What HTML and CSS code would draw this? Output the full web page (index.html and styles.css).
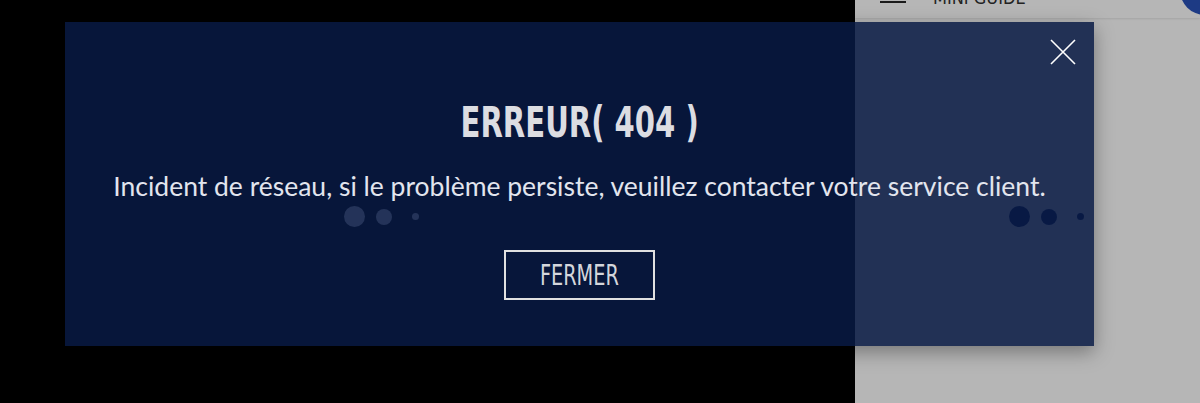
FILE: index.html
```html
<!DOCTYPE html>
<html lang="fr">
<head>
<meta charset="utf-8">
<title>Erreur 404</title>
<link rel="stylesheet" href="styles.css">
</head>
<body>
<div class="stage">
  <section class="pane pane-dark">
    <div class="loader loader-light">
      <span class="dot dot-lg"></span><span class="dot dot-md"></span><span class="dot dot-sm"></span>
    </div>
  </section>
  <section class="pane pane-grey">
    <header class="topbar">
      <span class="burger"><i></i><i></i></span>
      <span class="brand">MINI GUIDE</span>
      <span class="avatar"></span>
    </header>
    <div class="loader loader-navy">
      <span class="dot dot-lg"></span><span class="dot dot-md"></span><span class="dot dot-sm"></span>
    </div>
  </section>
</div>

<div class="modal" role="dialog">
  <button class="close" aria-label="Fermer">
    <svg width="26" height="26" viewBox="0 0 26 26"><path d="M1 1L25 25M25 1L1 25" stroke="#ffffff" stroke-width="1.6" fill="none"/></svg>
  </button>
  <h1 class="title"><span class="title-text">ERREUR( 404 )</span></h1>
  <p class="message">Incident de réseau, si le problème persiste, veuillez contacter votre service client.</p>
  <button class="btn"><span class="btn-label">FERMER</span></button>
</div>
</body>
</html>
```
FILE: styles.css
```css
html, body {
  margin: 0;
  padding: 0;
  height: 100%;
  background: #000;
  overflow: hidden;
}
.stage {
  display: grid;
  grid-template-columns: 855px 1fr;
  height: 403px;
}
.pane {
  position: relative;
  display: flex;
  flex-direction: column;
}
.pane-dark { background: #000; }
.pane-grey { background: #b6b6b6; }

.topbar {
  height: 18px;
  display: flex;
  align-items: flex-start;
  box-shadow: 0 1px 2px rgba(0,0,0,0.10);
  position: relative;
}
.burger {
  display: flex;
  flex-direction: column;
  gap: 7px;
  width: 26px;
  margin-left: 25px;
  margin-top: -8px;
}
.burger i {
  display: block;
  height: 2px;
  background: #1a1a1a;
}
.brand {
  font-family: "Liberation Sans Narrow", "DejaVu Sans Condensed", sans-serif;
  font-size: 18px;
  line-height: 18px;
  color: #222;
  margin-left: 27px;
  margin-top: -11px;
}
.avatar {
  position: absolute;
  right: -30px;
  top: -35px;
  width: 50px;
  height: 50px;
  border-radius: 50%;
  background: #1d3a84;
}

.loader {
  display: flex;
  align-items: center;
  gap: 10px;
  position: absolute;
  top: 206px;
}
.loader-light { left: 344px; }
.loader-navy { left: 154px; }
.dot { display: block; border-radius: 50%; }
.dot-lg { width: 21px; height: 21px; }
.dot-md { width: 16px; height: 16px; margin-left: 1px; }
.dot-sm { width: 7px; height: 7px; margin-left: 10px; }
.loader-light .dot { background: #c0c4cc; }
.loader-navy .dot { background: #0a1a48; }

.modal {
  position: absolute;
  left: 65px;
  top: 22px;
  width: 1029px;
  height: 324px;
  box-sizing: border-box;
  background: rgba(8, 26, 68, 0.85);
  box-shadow: 0 6px 18px rgba(0,0,0,0.35);
  display: flex;
  flex-direction: column;
  align-items: center;
  padding-top: 77px;
}
.close {
  position: absolute;
  right: 18px;
  top: 17px;
  background: none;
  border: 0;
  padding: 0;
  width: 26px;
  height: 26px;
  cursor: pointer;
}
.close svg { display: block; }
.title {
  margin: 0;
  font-family: "Liberation Sans Narrow", "DejaVu Sans Condensed", sans-serif;
  font-weight: bold;
  font-size: 42px;
  line-height: 48px;
  color: #dcdde2;
}
.title-text {
  display: inline-block;
  transform: scaleX(0.77);
}
.message {
  margin: 23px 0 0;
  font-family: "Lato", "Open Sans", sans-serif;
  font-size: 26.5px;
  line-height: 32px;
  color: #e2e5ee;
}
.btn {
  margin-top: 48px;
  width: 151px;
  height: 50px;
  box-sizing: border-box;
  background: transparent;
  border: 2px solid #e0e0e0;
  color: #d4d6dc;
  font-family: "Liberation Sans Narrow", "DejaVu Sans Condensed", sans-serif;
  font-size: 29px;
  line-height: 46px;
  padding: 0;
  cursor: pointer;
}
.btn-label {
  display: inline-block;
  transform: scaleX(0.74);
}
```
